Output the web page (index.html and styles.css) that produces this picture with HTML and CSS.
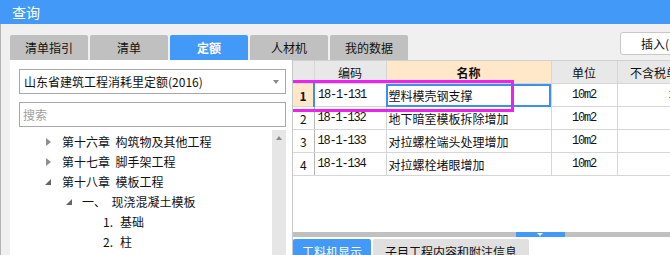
FILE: index.html
```html
<!DOCTYPE html>
<html lang="zh-CN">
<head>
<meta charset="UTF-8">
<title>查询</title>
<link rel="stylesheet" href="styles.css">
</head>
<body>
<div class="titlebar">查询</div>

<div class="page">
  <div class="toolbar">
    <div class="tabs">
      <div class="tab">清单指引</div>
      <div class="tab">清单</div>
      <div class="tab active">定额</div>
      <div class="tab">人材机</div>
      <div class="tab">我的数据</div>
    </div>
    <div class="insert">插入(I)</div>
  </div>

  <div class="main">
    <div class="left">
      <div class="select">山东省建筑工程消耗里定额(2016)<span class="caret"></span></div>
      <div class="search">搜索</div>
      <div class="tree-wrap">
        <div class="tree">
          <div class="node lv1"><span class="arrow closed"></span>第十六章&nbsp;&nbsp;构筑物及其他工程</div>
          <div class="node lv1"><span class="arrow closed"></span>第十七章&nbsp;&nbsp;脚手架工程</div>
          <div class="node lv1"><span class="arrow open"></span>第十八章&nbsp;&nbsp;模板工程</div>
          <div class="node lv2"><span class="arrow open"></span>一、&nbsp;&nbsp;现浇混凝土模板</div>
          <div class="node lv3"><span class="num">1.</span>基础</div>
          <div class="node lv3"><span class="num">2.</span>柱</div>
          <div class="node lv3"><span class="num">3.</span>梁</div>
        </div>
        <div class="vscroll"><span class="up"></span></div>
      </div>
    </div>

    <div class="right">
      <div class="grid-panel">
        <table class="grid">
          <colgroup>
            <col class="c-no"><col class="c-code"><col class="c-name"><col class="c-unit"><col class="c-price">
          </colgroup>
          <tr class="head">
            <th></th>
            <th>编码</th>
            <th class="cur">名称</th>
            <th>单位</th>
            <th>不含税单价</th>
          </tr>
          <tr class="sel">
            <td class="no">1</td>
            <td class="code">18-1-131</td>
            <td class="name">塑料模壳钢支撑</td>
            <td class="unit">10m2</td>
            <td class="price">12.78</td>
          </tr>
          <tr>
            <td class="no">2</td>
            <td class="code">18-1-132</td>
            <td class="name">地下暗室模板拆除增加</td>
            <td class="unit">10m2</td>
            <td class="price"></td>
          </tr>
          <tr>
            <td class="no">3</td>
            <td class="code">18-1-133</td>
            <td class="name">对拉螺栓端头处理增加</td>
            <td class="unit">10m2</td>
            <td class="price"></td>
          </tr>
          <tr>
            <td class="no">4</td>
            <td class="code">18-1-134</td>
            <td class="name">对拉螺栓堵眼增加</td>
            <td class="unit">10m2</td>
            <td class="price"></td>
          </tr>
        </table>
        <div class="mark"></div>
      </div>
      <div class="splitter"><span class="handle"></span></div>
      <div class="subtabs">
        <div class="subtab active">工料机显示</div>
        <div class="subtab">子目工程内容和附注信息</div>
      </div>
    </div>
  </div>
</div>
</body>
</html>
```

FILE: styles.css
```css
body {
  margin: 0;
  background: #f0f0f0;
  font-family: "Noto Sans CJK SC", "Liberation Sans", sans-serif;
  font-size: 12px;
  color: #111;
  overflow: hidden;
  width: 670px;
  height: 255px;
}

.titlebar {
  height: 24px;
  line-height: 24px;
  background: #4399f7;
  color: #fff;
  font-size: 14px;
  padding-left: 12px;
}

.page {
  border-left: 1px solid #b4b4b4;
}

/* top tabs */
.toolbar {
  display: flex;
  height: 36px;
}
.tabs {
  display: flex;
  gap: 2px;
  margin-left: 9px;
  align-self: flex-end;
}
.tab {
  width: 78px;
  height: 25px;
  line-height: 25px;
  text-align: center;
  background: #c0c0c0;
  border-radius: 2px 2px 0 0;
  font-size: 12px;
}
.tab.active {
  background: #4399f7;
  color: #fff;
  font-weight: bold;
}
.insert {
  margin-left: 212px;
  margin-top: 8px;
  height: 21px;
  line-height: 21px;
  width: 80px;
  flex-shrink: 0;
  padding-left: 20px;
  background: #fff;
  border: 1px solid #c8c8c8;
  border-radius: 3px;
}

.main {
  display: flex;
  height: 195px;
}

/* left side */
.left {
  width: 267px;
  flex-shrink: 0;
  margin-left: 9px;
  background: #fff;
  padding: 9px 6px 0 9px;
}
.select, .search {
  height: 23px;
  line-height: 23px;
  border: 1px solid #a8a8a8;
  padding-left: 4px;
  position: relative;
}
.caret {
  position: absolute;
  right: 6px;
  top: 10px;
  border-top: 4px solid #8a8a8a;
  border-left: 3px solid transparent;
  border-right: 3px solid transparent;
}
.search {
  margin-top: 8px;
  color: #a0a0a0;
  padding-left: 3px;
}
.tree-wrap {
  display: flex;
  margin-top: 3px;
  height: 130px;
}
.tree {
  flex: 1;
  padding-top: 2px;
}
.vscroll {
  width: 14px;
  background: #e6e6e6;
  position: relative;
}
.up {
  position: absolute;
  left: 4px;
  top: 6px;
  border-bottom: 4px solid #8a8a8a;
  border-left: 3px solid transparent;
  border-right: 3px solid transparent;
}
.node {
  height: 20px;
  line-height: 20px;
  display: flex;
  align-items: center;
  white-space: nowrap;
}
.lv1 { padding-left: 26px; }
.lv2 { padding-left: 47px; }
.lv3 { padding-left: 84px; }
.arrow {
  width: 17px;
  height: 10px;
  flex-shrink: 0;
  position: relative;
}
.lv2 .arrow { width: 16px; }
.arrow.closed::before {
  content: "";
  position: absolute;
  left: 1px;
  top: 1px;
  border-left: 5px solid #8e8e8e;
  border-top: 4px solid transparent;
  border-bottom: 4px solid transparent;
}
.arrow.open::before {
  content: "";
  position: absolute;
  left: 0;
  top: 2px;
  border-bottom: 6px solid #666;
  border-left: 6px solid transparent;
}
.num {
  width: 17px;
}

/* right side */
.right {
  flex: 1;
  border-left: 1px solid #c8c8c8;
  background: #fff;
  overflow: hidden;
}
.grid-panel {
  position: relative;
  height: 171px;
  border-top: 1px solid #d0d0d0;
}
.grid {
  border-collapse: collapse;
  table-layout: fixed;
  width: 410px;
}
.c-no { width: 21px; }
.c-code { width: 72px; }
.c-name { width: 165px; }
.c-unit { width: 66px; }
.c-price { width: 86px; }
.grid th, .grid td {
  height: 22px;
  padding: 0;
  border: 1px solid #d6d6d6;
  white-space: nowrap;
  overflow: hidden;
}
.grid tr:first-child th { border-top: none; }
.grid tr th:first-child, .grid tr td:first-child { border-left: none; }
.grid th {
  background: #e8e8e8;
  font-weight: normal;
  text-align: center;
}
.grid th.cur {
  background: #ffe7ca;
  font-weight: bold;
}
.no {
  text-align: center;
  border-right-color: #b8b8b8 !important;
}
.code, .unit, .price {
  font-family: "Liberation Mono", monospace;
  font-size: 12px;
  letter-spacing: -1.2px;
}
.code {
  padding-left: 3px !important;
}
.name {
  padding-left: 2px !important;
}
.unit {
  text-align: center;
}
.price {
  text-align: right;
  padding-right: 4px !important;
}
.sel .no {
  background: #ffe7ca;
  font-weight: bold;
}
.sel .code {
  border-left: 2px solid #3b8ff0;
}
.sel .name {
  outline: 2px solid #3b8ff0;
  outline-offset: -2px;
}
.mark {
  position: absolute;
  left: -3px;
  top: 19px;
  width: 224px;
  height: 32px;
  box-sizing: border-box;
  border: 3px solid #ee22ee;
}

.splitter {
  height: 5px;
  background: #c0c0c0;
  position: relative;
}
.handle {
  position: absolute;
  left: 223px;
  top: 0;
  width: 49px;
  height: 5px;
  background: #4399f7;
}
.handle::after {
  content: "";
  position: absolute;
  left: 21px;
  top: 1px;
  border-top: 3px solid #fff;
  border-left: 3px solid transparent;
  border-right: 3px solid transparent;
}
.subtabs {
  display: flex;
  gap: 2px;
  padding-top: 2px;
}
.subtab {
  height: 25px;
  line-height: 25px;
  padding: 0 12px;
  background: #e0e0e0;
  border-radius: 2px 2px 0 0;
}
.subtab.active {
  width: 78px;
  padding: 0;
  text-align: center;
  background: #4399f7;
  color: #fff;
}
```
